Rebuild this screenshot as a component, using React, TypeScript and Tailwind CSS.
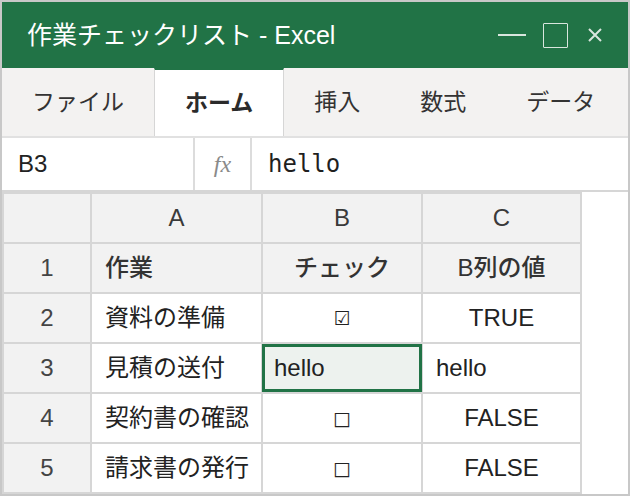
import React from "react";

const rows = [
  { n: "1", a: "作業", b: "チェック", c: "B列の値", kind: "head" },
  { n: "2", a: "資料の準備", b: "☑", c: "TRUE", kind: "box" },
  { n: "3", a: "見積の送付", b: "hello", c: "hello", kind: "sel" },
  { n: "4", a: "契約書の確認", b: "□", c: "FALSE", kind: "box" },
  { n: "5", a: "請求書の発行", b: "□", c: "FALSE", kind: "box" },
];

export default function App() {
  return (
    <div className="w-[630px] h-[496px] border-2 border-[#c8c8c8] bg-white flex flex-col overflow-hidden font-['Liberation_Sans','Noto_Sans_CJK_JP',sans-serif]">
      {/* Title bar */}
      <div className="h-[66px] shrink-0 bg-[#217346] flex items-center pl-[25px] pr-[26px]">
        <div className="text-white text-[25px] leading-none flex-1 whitespace-nowrap">作業チェックリスト - Excel</div>
        <div className="flex items-center">
          <div className="w-[28px] h-[2px] bg-[#d9e6de]" />
          <div className="ml-[17px] w-[25px] h-[25px] border-[1.5px] border-[#d9e6de] rounded-[1px]" />
          <svg className="ml-[20px]" width="14" height="14" viewBox="0 0 14 14">
            <path d="M1 1L13 13M13 1L1 13" stroke="#d9e6de" strokeWidth="2" />
          </svg>
        </div>
      </div>

      {/* Tabs */}
      <div className="h-[70px] shrink-0 bg-[#f3f2f1] border-b-2 border-[#e1e1e1] flex items-stretch text-[23px] text-[#333] whitespace-nowrap overflow-hidden">
        <div className="shrink-0 px-[30px] flex items-center">ファイル</div>
        <div className="shrink-0 px-[30px] flex items-center bg-white border-x border-[#d6d6d6] border-t-2 border-t-[#217346] font-bold text-[#2b2b2b]">ホーム</div>
        <div className="shrink-0 px-[30px] flex items-center">挿入</div>
        <div className="shrink-0 px-[30px] flex items-center">数式</div>
        <div className="shrink-0 px-[30px] flex items-center">データ</div>
      </div>

      {/* Formula bar */}
      <div className="h-[54px] shrink-0 border-b-2 border-[#d6d6d6] flex items-stretch">
        <div className="w-[193px] border-r-2 border-[#dcdcdc] flex items-center pl-[16px] text-[24px] text-[#222]">B3</div>
        <div className="w-[57px] border-r-2 border-[#dcdcdc] flex items-center justify-center text-[24px] italic text-[#8a8a8a] font-['Liberation_Serif',serif]">fx</div>
        <div className="flex-1 flex items-center pl-[16px] text-[24px] text-[#1f1f1f] font-['DejaVu_Sans_Mono',monospace]">hello</div>
      </div>

      {/* Grid */}
      <div className="flex-1 flex">
        <div className="w-[580px] bg-[#d6d6d6] p-[2px] grid grid-cols-[86px_169px_158px_157px] grid-rows-[48px_48px_48px_48px_48px_48px] gap-[2px] text-[24px]">
          <div className="bg-[#f2f2f2]" />
          <div className="bg-[#f2f2f2] flex items-center justify-center text-[#3a3a3a]">A</div>
          <div className="bg-[#f2f2f2] flex items-center justify-center text-[#3a3a3a]">B</div>
          <div className="bg-[#f2f2f2] flex items-center justify-center text-[#3a3a3a]">C</div>
          {rows.map((r) => (
            <React.Fragment key={r.n}>
              <div className="bg-[#f2f2f2] flex items-center justify-center text-[#444]">{r.n}</div>
              {r.kind === "head" ? (
                <>
                  <div className="bg-[#f2f2f2] flex items-center pl-[13px] text-[#333] font-medium">{r.a}</div>
                  <div className="bg-[#f2f2f2] flex items-center justify-center text-[#333] font-medium">{r.b}</div>
                  <div className="bg-[#f2f2f2] flex items-center justify-center text-[#333] font-medium">{r.c}</div>
                </>
              ) : r.kind === "sel" ? (
                <>
                  <div className="bg-white flex items-center pl-[13px] text-[#222]">{r.a}</div>
                  <div className="bg-[#edf2ee] -ml-[1px] -mr-[1px] border-[3px] border-[#217346] flex items-center pl-[9px] text-[#222]">{r.b}</div>
                  <div className="bg-white flex items-center pl-[13px] text-[#222]">{r.c}</div>
                </>
              ) : (
                <>
                  <div className="bg-white flex items-center pl-[13px] text-[#222]">{r.a}</div>
                  <div className="bg-white flex items-center justify-center text-[19px] text-[#222] font-['DejaVu_Sans',sans-serif]">{r.b}</div>
                  <div className="bg-white flex items-center justify-center text-[#222]">{r.c}</div>
                </>
              )}
            </React.Fragment>
          ))}
        </div>
      </div>
    </div>
  );
}
